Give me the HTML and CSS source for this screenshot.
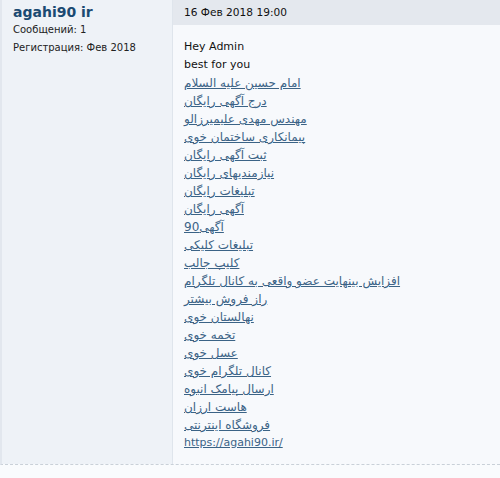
FILE: index.html
```html
<!DOCTYPE html>
<html lang="ru">
<head>
  <meta charset="UTF-8" />
  <title>agahi90 ir</title>
  <link rel="stylesheet" href="styles.css">
</head>
<body>

  <div class="post">
    <div class="author">
      <a href="#" class="username">agahi90 ir</a>
      <p>Сообщений: 1</p>
      <p>Регистрация: Фев 2018</p>
    </div>
    <div class="message">
      <div class="message-head">16 Фев 2018 19:00</div>
      <div class="message-body">
        <p>Hey Admin</p>
        <p>best for you</p>
        <a href="#" class="fa">امام حسین علیه السلام</a>
        <a href="#" class="fa">درج آگهی رایگان</a>
        <a href="#" class="fa">مهندس مهدی علیمیرزالو</a>
        <a href="#" class="fa">پیمانکاری ساختمان خوی</a>
        <a href="#" class="fa">ثبت آگهی رایگان</a>
        <a href="#" class="fa">نیازمندیهای رایگان</a>
        <a href="#" class="fa">تبلیغات رایگان</a>
        <a href="#" class="fa">آگهی رایگان</a>
        <a href="#" class="fa">آگهی90</a>
        <a href="#" class="fa">تبلیغات کلیکی</a>
        <a href="#" class="fa">کلیپ جالب</a>
        <a href="#" class="fa">افزایش بینهایت عضو واقعی به کانال تلگرام</a>
        <a href="#" class="fa">راز فروش بیشتر</a>
        <a href="#" class="fa">نهالستان خوی</a>
        <a href="#" class="fa">تخمه خوی</a>
        <a href="#" class="fa">عسل خوی</a>
        <a href="#" class="fa">کانال تلگرام خوی</a>
        <a href="#" class="fa">ارسال پیامک انبوه</a>
        <a href="#" class="fa">هاست ارزان</a>
        <a href="#" class="fa">فروشگاه اینترنتی</a>
        <a href="#">https://agahi90.ir/</a>
      </div>
    </div>
  </div>

</body>
</html>
```

FILE: styles.css
```css
body {
  margin: 0;
  font-family: 'DejaVu Sans', Tahoma, sans-serif;
  font-size: 11px;
  color: #000;
  background: #f9fbfd;
}
.post {
  display: grid;
  grid-template-columns: 171px 1fr;
  border-left: 2px solid #e2e7ee;
  border-bottom: 1px dashed #c9d0d8;
  height: 465px;
  box-sizing: border-box;
}
.author {
  background: #eef2f7;
  border-right: 1px solid #dfe5ec;
  padding: 3px 0 0 11px;
}
.username {
  display: block;
  font-size: 14px;
  font-weight: bold;
  color: #1b4a72;
  text-decoration: none;
  line-height: 18px;
}
.author p {
  margin: 0;
  font-size: 10px;
  line-height: 18px;
  color: #222;
}
.message {
  display: flex;
  flex-direction: column;
}
.message-head {
  background: #e4e8ee;
  height: 25px;
  line-height: 24px;
  padding-left: 11px;
  font-size: 10.6px;
  color: #111;
}
.message-body {
  background: #f7f9fc;
  flex: 1;
  padding: 13px 11px 0;
  color: #111;
}
.message-body p,
.message-body a {
  display: block;
  width: fit-content;
  margin: 0;
  height: 18px;
  line-height: 18px;
}
.message-body a {
  color: #3b6386;
  text-decoration: underline;
}
.message-body a.fa {
  font-size: 12px;
}
```
